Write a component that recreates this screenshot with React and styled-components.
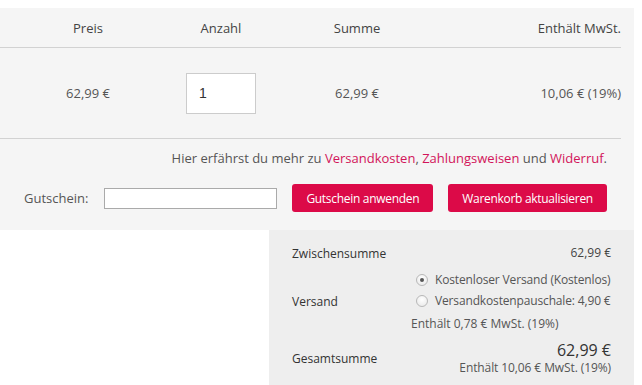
import React, { useState } from 'react'
import styled, { createGlobalStyle } from 'styled-components'

const GlobalStyle = createGlobalStyle`
  html, body {
    margin: 0;
    padding: 0;
    background: #ffffff;
    font-family: 'Open Sans', 'Liberation Sans', sans-serif;
    color: #555555;
  }
`

const Page = styled.div`
  padding-top: 8px;
  width: 634px;
`

const CartBox = styled.div`
  background: #f5f5f5;
  padding-bottom: 18px;
`

const Table = styled.div`
  width: 621px;
`

const Row = styled.div`
  display: grid;
  grid-template-columns: 176px 90px 182px 173px;
  align-items: center;
  height: ${(p) => p.$height}px;
  border-bottom: 1px solid #d2d2d2;
  font-size: 13px;
  color: ${(p) => (p.$head ? '#444444' : '#555555')};
`

const Cell = styled.div`
  display: flex;
  white-space: nowrap;
  justify-content: ${(p) => (p.$align === 'right' ? 'flex-end' : 'center')};
`

const QtyInput = styled.input`
  box-sizing: border-box;
  width: 70px;
  height: 41px;
  border: 1px solid #cccccc;
  background: #ffffff;
  padding: 0 12px;
  font-family: 'Liberation Sans', Arial, sans-serif;
  font-size: 14px;
  color: #333333;
  outline: none;
`

const Footer = styled.div`
  padding-right: 27px;
  display: flex;
  flex-direction: column;
  align-items: flex-end;
`

const Info = styled.p`
  margin: 9px 0 0;
  line-height: 20px;
  font-size: 13px;
  color: #555555;
  white-space: nowrap;
`

const Link = styled.a`
  color: #d2145a;
  text-decoration: none;
`

const CouponRow = styled.div`
  align-self: stretch;
  display: flex;
  align-items: center;
  margin-top: 16px;
  padding-left: 24px;
`

const CouponLabel = styled.label`
  font-size: 13px;
  color: #555555;
  margin-right: 16px;
`

const CouponInput = styled.input`
  box-sizing: border-box;
  width: 173px;
  height: 21px;
  border: 1px solid #aaaaaa;
  background: #ffffff;
  margin-right: 15px;
  outline: none;
`

const Button = styled.button`
  width: ${(p) => p.$width}px;
  height: 28px;
  padding: 0;
  border: none;
  border-radius: 3px;
  background: #dc0a48;
  color: #ffffff;
  font-family: 'Open Sans', 'Liberation Sans', sans-serif;
  font-size: 12px;
  letter-spacing: -0.3px;
  white-space: nowrap;
  cursor: pointer;
  margin-left: ${(p) => p.$gap || 0}px;
`

const Totals = styled.div`
  margin-left: 269px;
  background: #eeeeee;
  padding: 13px 23px 12px;
  font-size: 12px;
  color: #444444;
`

const TotalRow = styled.div`
  display: grid;
  grid-template-columns: 119px 1fr;
  align-items: center;
  margin-top: ${(p) => p.$top || 0}px;
`

const Label = styled.div`
  font-size: 12px;
  color: #333333;
`

const Value = styled.div`
  text-align: right;
  line-height: 20px;
  white-space: nowrap;
`

const ShippingList = styled.div`
  display: flex;
  flex-direction: column;
`

const Option = styled.label`
  display: flex;
  align-items: center;
  line-height: 21px;
  padding-left: 5px;
  font-size: 12px;
  letter-spacing: -0.15px;
  white-space: nowrap;
  color: #555555;
  cursor: pointer;
`

const Radio = styled.span`
  flex: none;
  box-sizing: border-box;
  width: 12px;
  height: 12px;
  border-radius: 50%;
  border: 1px solid #b8b8b8;
  background: radial-gradient(circle at 50% 35%, #ffffff 0%, #e6e6e6 100%);
  margin-right: 7px;
  display: flex;
  align-items: center;
  justify-content: center;

  &::after {
    content: '';
    width: 4px;
    height: 4px;
    border-radius: 50%;
    background: ${(p) => (p.$checked ? '#555555' : 'transparent')};
  }
`

const TaxNote = styled.div`
  margin-top: 2px;
  line-height: 21px;
  font-size: 12px;
  white-space: nowrap;
  color: #555555;
`

const GrandAmount = styled.div`
  font-size: 16px;
  line-height: 19px;
  font-weight: 500;
  color: #333333;
`

const GrandNote = styled.div`
  font-size: 12px;
  line-height: 15px;
  letter-spacing: -0.1px;
  color: #555555;
`

export default function App() {
  const [shipping, setShipping] = useState('free')

  return (
    <>
      <GlobalStyle />
      <Page>
        <CartBox>
          <Table>
            <Row $head $height={39}>
              <Cell>Preis</Cell>
              <Cell>Anzahl</Cell>
              <Cell>Summe</Cell>
              <Cell $align="right">Enthält MwSt.</Cell>
            </Row>
            <Row $height={90}>
              <Cell>62,99 €</Cell>
              <Cell>
                <QtyInput defaultValue="1" />
              </Cell>
              <Cell>62,99 €</Cell>
              <Cell $align="right">10,06 € (19%)</Cell>
            </Row>
          </Table>
          <Footer>
            <Info>
              Hier erfährst du mehr zu <Link href="#">Versandkosten</Link>,{' '}
              <Link href="#">Zahlungsweisen</Link> und <Link href="#">Widerruf</Link>.
            </Info>
            <CouponRow>
              <CouponLabel>Gutschein:</CouponLabel>
              <CouponInput />
              <Button $width={141}>Gutschein anwenden</Button>
              <Button $width={159} $gap={15}>Warenkorb aktualisieren</Button>
            </CouponRow>
          </Footer>
        </CartBox>
        <Totals>
          <TotalRow>
            <Label>Zwischensumme</Label>
            <Value>62,99 €</Value>
          </TotalRow>
          <TotalRow $top={6}>
            <Label>Versand</Label>
            <div>
              <ShippingList>
                <Option onClick={() => setShipping('free')}>
                  <Radio $checked={shipping === 'free'} />
                  Kostenloser Versand (Kostenlos)
                </Option>
                <Option onClick={() => setShipping('flat')}>
                  <Radio $checked={shipping === 'flat'} />
                  Versandkostenpauschale: 4,90 €
                </Option>
              </ShippingList>
              <TaxNote>Enthält 0,78 € MwSt. (19%)</TaxNote>
            </div>
          </TotalRow>
          <TotalRow $top={7}>
            <Label>Gesamtsumme</Label>
            <Value>
              <GrandAmount>62,99 €</GrandAmount>
              <GrandNote>Enthält 10,06 € MwSt. (19%)</GrandNote>
            </Value>
          </TotalRow>
        </Totals>
      </Page>
    </>
  )
}
